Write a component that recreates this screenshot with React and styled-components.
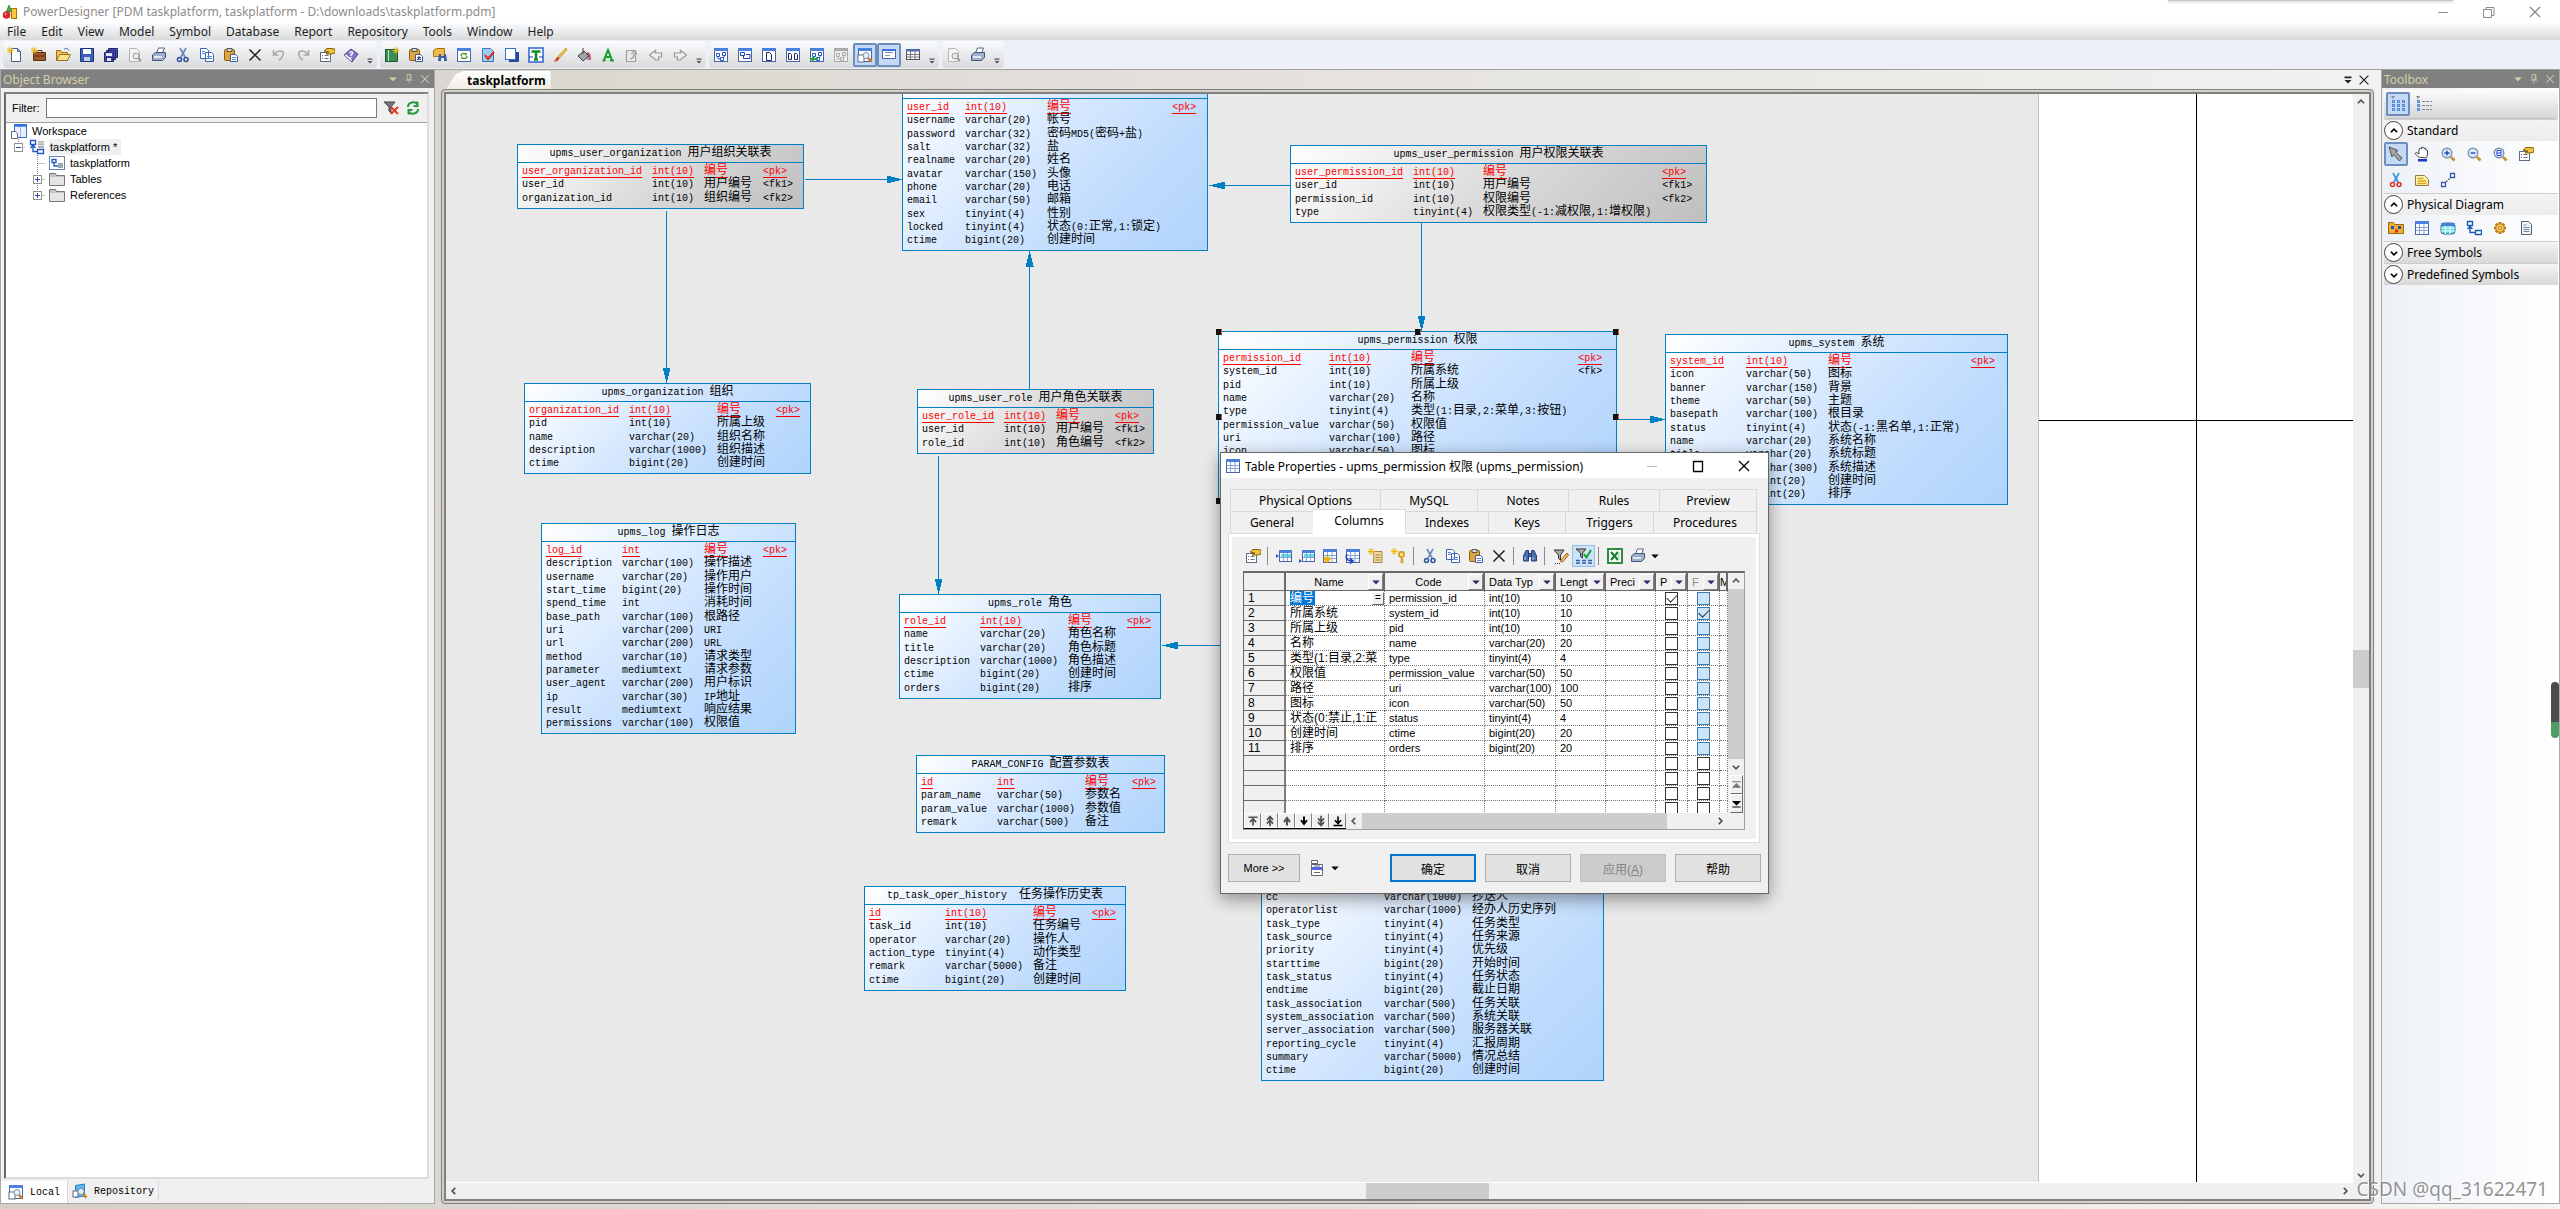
import React from 'react';
import styled, { createGlobalStyle, css } from 'styled-components';

const UI = '"Noto Sans", "Noto Sans CJK SC", sans-serif';
const SMALL = '"Liberation Sans", "Noto Sans CJK SC", sans-serif';
const MONO = '"Liberation Mono", "Noto Sans CJK SC", monospace';

const GlobalStyle = createGlobalStyle`
    * { box-sizing: border-box; }
    body { margin: 0; font-family: ${UI}; font-size: 12px; color: #000; }
    button { font: inherit; color: inherit; padding: 0; border: 0; background: none; }
    ul { list-style: none; margin: 0; padding: 0; }
`;

/* ---------- icons ---------- */

const star = <path d="M3 0v7M0 3.5h7M.6 1l5 5M5.6 1l-5 5" stroke="#f0b400" strokeWidth="1" />;
const page = <path d="M4.5 1.5h6l3 3v10h-9z M10.5 1.5v3h3" fill="#fff" stroke="#4a5f8c" />;
const lens = (
    <>
        <path d="M11 11l3.5 3.5" stroke="#c8922a" strokeWidth="2.6" />
        <circle cx="7" cy="7" r="4.8" fill="#dcebfa" stroke="#7c93b0" strokeWidth="1.4" />
    </>
);
const sheet = (
    <>
        <rect x="1.5" y="1.5" width="13" height="13" fill="#fff" stroke="#4863a8" />
        <rect x="1" y="1" width="14" height="3" fill="#4a80dc" />
    </>
);
const cells = (
    <>
        {sheet}
        <path d="M2 7.5h12M2 10.5h12M5.5 4v10M10 4v10" stroke="#8aa4d8" />
    </>
);
const cellsCyan = (
    <>
        <rect x="3.5" y="2.5" width="12" height="11" fill="#fff" stroke="#4863a8" />
        <rect x="3" y="2" width="13" height="3" fill="#4a80dc" />
        <rect x="5" y="6" width="10" height="4" fill="#59e0e8" />
        <path d="M4 9.5h11M7.5 5v8M11.5 5v8" stroke="#8aa4d8" />
    </>
);
const clipboard = (
    <>
        <rect x="1.5" y="2.5" width="10" height="11" rx="1" fill="#e0a63a" stroke="#8a5c14" />
        <path d="M4 1.5h5v3H4z" fill="#d8d8d8" stroke="#555" />
        <path d="M7.5 7.5h5l2 2v5h-7z" fill="#fff" stroke="#3c5a9c" />
        <path d="M9 10.5h4M9 12.5h4" stroke="#5b83d0" />
    </>
);
const scissors = color => (
    <>
        <path d="M5 1l5 9M11 1L6 10" stroke={color[0]} strokeWidth="1.7" fill="none" />
        <circle cx="4.5" cy="12.5" r="2" fill="none" stroke={color[1]} strokeWidth="1.5" />
        <circle cx="11" cy="12.5" r="2" fill="none" stroke={color[1]} strokeWidth="1.5" />
    </>
);
const printer = (
    <>
        <path d="M5.5 6l2-5h6l-2 5z" fill="#fff" stroke="#52658c" />
        <path d="M1.5 8l3-2.5h10v5l-3 3h-10z" fill="#9fb0cc" stroke="#44557a" />
        <path d="M3 10h8" stroke="#fff" strokeWidth="1.4" />
    </>
);
const properties = (
    <>
        <rect x="1.5" y="5.5" width="10" height="9" fill="#fff" stroke="#5f6c86" />
        <path d="M3 8.5h1M3 11.5h1M5.5 8.5h4M5.5 11.5h4" stroke="#777" />
        <path d="M5 4l3-2.5h4l4 .5v4l-4 1H7l3-2z" fill="#f0c43c" stroke="#80600c" />
    </>
);
const binoculars = (
    <>
        <path d="M4 2.5h2.5V13h-5V8z M9.5 2.5H12L14.5 8v5h-5z M6.5 5.5h3v3h-3z" fill="#4a70b4" stroke="#233c74" />
        <path d="M3 9v3M11 9v3" stroke="#b8d0f4" />
    </>
);
const cross = <path d="M2.5 2.5l11 11M13.5 2.5l-11 11" stroke="#222" strokeWidth="1.5" />;
const links = color => (
    <path d="M3.5 6.5h3v3h-3z M9.5 5.5h3v3h-3z M7.5 10.5h3v3h-3z M5 9.5v2.5h2.5 M11 8.5v2" fill="none" stroke={color} />
);

const icons = {
    logo: (
        <>
            <path d="M7 1l3 7H4z" fill="#3fae49" stroke="#1c7a2a" strokeWidth=".6" />
            <circle cx="4.5" cy="11" r="3.8" fill="#d02828" />
            <circle cx="3.5" cy="10" r="1.2" fill="#f09090" />
            <rect x="9.5" y="4.5" width="5" height="10" fill="#f8c83c" stroke="#a87410" />
        </>
    ),
    newModel: <>{page}{star}</>,
    project: <><path d="M2.5 5.5h12v8h-12z" fill="#9c5a2c" stroke="#5c3010" /><path d="M6 5V3.5h5V5M3 9h11" stroke="#5c3010" fill="none" />{star}</>,
    open: <><path d="M1.5 13.5v-10h4l1 2h6v8z" fill="#f2c44c" stroke="#9a7218" /><path d="M1.5 13.5l3-6h11l-3 6z" fill="#fae08c" stroke="#9a7218" /><path d="M9 2.5c2-2 4-1 5 1" stroke="#3c68b0" fill="none" /></>,
    save: <><path d="M1.5 1.5h13v13h-13z" fill="#3c5cc0" stroke="#1c3480" /><path d="M4 2h8v5H4z" fill="#fff" /><path d="M5 10h6v4H5z" fill="#c8d0e8" /></>,
    saveAll: <><path d="M5.5 1.5h9v9h-9z M3.5 3.5h9v9h-9z M1.5 5.5h9v9h-9z" fill="#4c50b8" stroke="#20246c" /><path d="M3 6h6v3H3z M4 11h4v3H4z" fill="#e4e6f8" /></>,
    preview: <><path d="M2.5 1.5h7l3 3v10h-10z" fill="#f4f4f4" stroke="#b4b4b4" /><circle cx="9" cy="9" r="3" fill="#eaeaea" stroke="#999" /><path d="M11 11l3 3" stroke="#999" strokeWidth="2" /></>,
    print: printer,
    cut: scissors(['#6c8cc0', '#2c50a4']),
    copy: <><path d="M1.5 1.5h6l2 2v8h-8z M6.5 5.5h6l2 2v7h-8z" fill="#fff" stroke="#3c66b4" /><path d="M8 9.5h5M8 11.5h5M3 4.5h3M3 6.5h3" stroke="#5b8ae0" /></>,
    paste: clipboard,
    del: cross,
    undo: <path d="M2.5 3v5h5M3 8c2-4 6-5 9-3 1 3-1 6-4 8" stroke="#a8a8a8" strokeWidth="1.6" fill="none" />,
    redo: <path d="M13.5 3v5h-5M13 8c-2-4-6-5-9-3-1 3 1 6 4 8" stroke="#a8a8a8" strokeWidth="1.6" fill="none" />,
    properties,
    help: <><path d="M1 8l7-6 7 5-6 8z" fill="#8078c4" stroke="#4c4490" /><path d="M1 8l8 7v-3L3 7z" fill="#fff" stroke="#4c4490" strokeWidth=".6" /><path d="M6.5 6c1-2 4-1 3 .6L8 8v1M8 10v1" stroke="#fff" fill="none" strokeWidth="1.3" /></>,
    newDiagram: <><rect x="1.5" y="2.5" width="12" height="12" fill="#3c8c54" stroke="#1c5c34" /><path d="M4.5 3v11" stroke="#b8e0c4" /><path d="M12 0v7M8.5 3.5h7M9.5 1l5 5M14.5 1l-5 5" stroke="#f0c020" /></>,
    pasteShort: <>{clipboard}<path d="M9 13l3-3M10 10h2v2" stroke="#1c3480" fill="none" /></>,
    find: <><path d="M1.5 3.5l3-2h8v8h-11z" fill="#f4b848" stroke="#a87410" /><path d="M7 7h2v7H6zM12 7h2l1 7h-3z M9 9h3v2H9z" fill="#3c5ca8" /></>,
    refreshWin: <>{sheet}<path d="M5 9c0-3 4-3 5-1.5V6M11 9c0 3-4 3-5 1.5V12" stroke="#4a9a20" fill="none" strokeWidth="1.3" /></>,
    check: <><path d="M2.5 1.5h8l3 3v10h-11z" fill="#9ccaf0" stroke="#3c78b4" /><path d="M5 8l3 4 6-7" stroke="#d82818" strokeWidth="2" fill="none" /></>,
    shadow: <><path d="M5 5h10v10H5z" fill="#24489c" /><rect x="1.5" y="1.5" width="10" height="11" fill="#fff" stroke="#3c68c8" /></>,
    text: <><rect x="1" y="1" width="14" height="14" fill="#fff" stroke="#2c60d0" strokeWidth="1.5" /><path d="M3.5 4.5h9M8 4v8M6 12.5h4" stroke="#108c28" strokeWidth="2.6" /><path d="M1 10h4M11 10h4" stroke="#2040a0" /></>,
    brush: <><path d="M14 1L6 9.5 7.5 11 15 3z" fill="#f4c030" stroke="#b07c10" strokeWidth=".6" /><path d="M6 10c-2 0-2 3-4.5 4.5C5 15 7 13 7.5 11z" fill="#d83818" /></>,
    fill: <><path d="M2 9l6-5 5 5-6 5z" fill="#a4a4a4" stroke="#444" /><path d="M7 1v6" stroke="#444" /><path d="M11 6c3 0 3 2 3 7" stroke="#e03030" strokeWidth="1.5" fill="none" /><path d="M10 7c3 0 2 2 2 6" stroke="#3040e0" fill="none" /></>,
    font: <path d="M2.5 13.5h3M10 13.5h4M4 13L8 3l4 10M5.5 10h5" stroke="#18a028" strokeWidth="2" fill="none" />,
    up: <path d="M2.5 3.5h9v11h-9z M6 12c3 0 4-2 4-6M7.5 7L10 3.5 13 7" fill="#e8e8e8" stroke="#a0a0a0" strokeWidth="1.2" />,
    back: <path d="M1.5 8l6-4.5V6h6v4h-3v3h-3v-.5z" fill="#efefef" stroke="#999" strokeWidth="1.2" />,
    forward: <path d="M14.5 8l-6-4.5V6h-6v4h3v3h3v-.5z" fill="#efefef" stroke="#999" strokeWidth="1.2" />,
    diag1: <>{sheet}{links('#2c54c8')}</>,
    diag2: <>{sheet}<path d="M3.5 5.5h4v3h-4zM9 7.5h4v4H6.5v-3" fill="none" stroke="#2040b0" /></>,
    diag3: <>{sheet}<path d="M5.5 5.5h3l2 2v6h-5z" fill="#fff" stroke="#1c2c60" /></>,
    diag4: <>{sheet}<path d="M3.5 6.5h2l1 1v5h-3zM9.5 6.5h2l1 1v5h-3z" fill="#fff" stroke="#1c2c60" /></>,
    diag5: <>{sheet}{links('#2c54c8')}<path d="M1 12l4-3v2h4v2H5v2z" fill="#20a838" /></>,
    diag6: <><rect x="1.5" y="1.5" width="13" height="13" fill="#eee" stroke="#aaa" /><path d="M1 3h14" stroke="#aaa" strokeWidth="2" />{links('#aaa')}</>,
    local: <>{sheet}<rect x="1" y="8" width="6" height="7" fill="#fff" stroke="#5c6c8c" /><path d="M11 11l3.5 3.5" stroke="#d08020" strokeWidth="2.5" /><circle cx="9" cy="8.5" r="3" fill="#e4f2fc" stroke="#7890a8" /></>,
    repo: <><path d="M3.5 2.5l9-1.5v12l-9 1.5z" fill="#5cb4ec" stroke="#2c80bc" /><rect x="1" y="8" width="5" height="6" fill="#fff" stroke="#5c6c8c" /><path d="M11 11l3.5 3.5" stroke="#d08020" strokeWidth="2.5" /><circle cx="9" cy="8.5" r="3" fill="#e4f2fc" stroke="#7890a8" /></>,
    output: <><path d="M1.5 2.5h13v9h-13z" fill="#fff" stroke="#4c64a0" /><path d="M4 5.5h8M4 8.5h5" stroke="#8494b4" /><path d="M1 3h14" stroke="#3c70d8" strokeWidth="2" /></>,
    result: <><rect x="1.5" y="2.5" width="13" height="10" fill="#fff" stroke="#4c4c6c" /><path d="M1 3.5h14" stroke="#5470b8" strokeWidth="2" /><path d="M2 7.5h12M2 10h12M5.5 4v8M10 4v8" stroke="#777" /></>,
    funnelX: <><path d="M1 2h11L8 7v6l-2-2V7z" fill="#777" stroke="#444" /><path d="M8 7l7 7M15 7l-7 7" stroke="#e83820" strokeWidth="2" /></>,
    refresh: <path d="M3 7c0-5 7-6 9-3V1.5M12.5 2v4h-4M13 9c0 5-7 6-9 3v2.5M3.5 14v-4h4" stroke="#249c3c" strokeWidth="2" fill="none" />,
    workspace: <><rect x="3.5" y="1.5" width="12" height="13" fill="#e8f0ff" stroke="#3c70c8" /><path d="M3 2.5h13" stroke="#3c70d8" strokeWidth="2.5" /><path d="M9.5 4v10" stroke="#9cb4e0" /><path d="M.5 8.5h4l2 2v5h-6z" fill="#fff" stroke="#5c6c8c" /></>,
    model: <><path d="M1.5 1.5h5v4h-5zM8.5 10.5h6v4h-6z M4 6v6.5h4M1.5 9L4 6l2.5 3" fill="#fff" stroke="#2458c8" strokeWidth="1.4" /><path d="M9 2h6v7H9z" fill="#b0b0b0" /><path d="M9 4h6M9 6.5h6" stroke="#e8e8e8" /></>,
    diagram: <><rect x=".5" y="1.5" width="15" height="13" fill="#fff" stroke="#6484b8" /><path d="M3 4.5h4v3H3zM5 8v3h4" stroke="#2458c8" fill="none" strokeWidth="1.3" /><rect x="9" y="8" width="5" height="5" fill="#9aa4b8" /></>,
    folder: <><path d="M.5 2.5h6l1 2h8v10H.5z" fill="#c4c4c4" stroke="#777" /><path d="M1 6h14v8H1z" fill="#e4e4e4" /></>,
    tiles: (
        <>
            <path d="M1 0l2 3 2-3z" fill="#888" />
            {[4.5, 8.5, 12.5].map(y => [2.5, 7.5, 12.5].map(x => (
                <rect key={`${x}-${y}`} x={x} y={y} width="2" height="2" fill="#f0a0b0" stroke="#4a90dc" />
            )))}
        </>
    ),
    list: (
        <>
            <path d="M0 0l2 3 2-3z" fill="#888" />
            {[4.5, 8.5, 12.5].map(y => (
                <React.Fragment key={y}>
                    <rect x="1.5" y={y} width="2" height="2" fill="#f0a0b0" stroke="#4a90dc" />
                    <path d={`M6 ${y + 1}h10`} stroke="#888" strokeDasharray="3 1" />
                </React.Fragment>
            ))}
        </>
    ),
    pointer: <path d="M1 1l9 3.5-2.5 1.5 6.5 6-2.5 3-6-6.5L4 11z" fill="#a4a4a4" stroke="#555" />,
    hand: <><path d="M4.5 11L1 7.5l1.5-1L5 8V3l1.5-1L7.5 3V1.5L9 1l1 1.5L11.5 2l.5 2 1.5.5V9L12 12z" fill="#fff" stroke="#333" strokeWidth=".9" /><path d="M4 13h9v2.5H4z" fill="#1438c8" /></>,
    zoomIn: <>{lens}<path d="M4.5 7h5M7 4.5v5" stroke="#2448a8" strokeWidth="1.4" /></>,
    zoomOut: <>{lens}<path d="M4.5 7h5" stroke="#2448a8" strokeWidth="1.4" /></>,
    zoomPage: <>{lens}<path d="M5 4.5h4v5H5zM5 7h4" stroke="#2448d8" fill="#fff" /></>,
    redCut: scissors(['#3c94d8', '#e03420']),
    note: <><path d="M1.5 3.5h9l4 4v6h-13z" fill="#fff4b0" stroke="#8c7c4c" /><path d="M3.5 6.5h6M3.5 9h9M3.5 11.5h9" stroke="#e0a020" strokeWidth="1.3" /></>,
    link: <><path d="M1.5 10.5h4v4h-4zM10.5 1.5h4v4h-4z" fill="#fff" stroke="#3c58b8" strokeWidth="1.3" /><path d="M6 10l4-4" stroke="#666" strokeWidth="1.4" strokeDasharray="2 1" /></>,
    pack: <><path d="M.5 13.5v-11h5l1 2h9v9z" fill="#f0b030" stroke="#9a6c10" /><path d="M3 6h3v3H3zM10 6h3v3h-3z" fill="#2c50b8" /><path d="M7 9.5h3v3H7z" fill="#d02c20" /></>,
    table: cells,
    view: <><rect x="1" y="3" width="14" height="11" rx="3" fill="#5ce0e0" stroke="#3c5c98" /><path d="M1 4.5h14" stroke="#4a80dc" strokeWidth="3" /><path d="M1 8h14M1 11h14M5.5 6v8M10 6v8" stroke="#fff" /></>,
    reference: <path d="M1.5 1.5h5v4h-5zM9.5 10.5h6v4h-6zM4 13V6M1.5 9L4 6.5 6.5 9M4 12.5h5" fill="#fff" stroke="#1c58b8" strokeWidth="1.4" />,
    gear: <><path d="M8 2v12M2 8h12M3.8 3.8l8.4 8.4M12.2 3.8l-8.4 8.4" stroke="#c88418" strokeWidth="3" /><circle cx="8" cy="8" r="4.3" fill="#f4c458" stroke="#b87810" /><circle cx="8" cy="8" r="1.5" fill="#fff" stroke="#b87810" /></>,
    file: <><path d="M3.5 1.5h7l3 3v10h-10z" fill="#f0f4fa" stroke="#52627c" /><path d="M5.5 5h3M5.5 7.5h6M5.5 9.5h6M5.5 11.5h6" stroke="#7888a0" /></>,
    insertRow: <>{cellsCyan}<path d="M0 6l3 2-3 2z" fill="#2458c8" /></>,
    addRow: <>{cellsCyan}<path d="M0 11l3 2-3 2z" fill="#2458c8" /></>,
    addStar: <>{cells}<path d="M5 8v7M1.5 11.5h7M2.5 9l5 5M7.5 9l-5 5" stroke="#f0b400" strokeWidth="1.3" /></>,
    replace: <>{cells}<path d="M2 6c-2 4 0 7 5 7M5 10.5l3 2.5-3 2.5" stroke="#1c48b8" fill="none" strokeWidth="1.6" /></>,
    scroll: <><path d="M6 3.5h8v11H5.5z" fill="#f0dca0" stroke="#a88440" /><path d="M7.5 7h5M7.5 9.5h5M7.5 12h5" stroke="#a88440" />{star}</>,
    key: <>{star}<path d="M10.5 9v6M10.5 12h2M10.5 14.5h2" stroke="#d09818" strokeWidth="1.5" /><circle cx="10.5" cy="6.5" r="2.7" fill="#fce080" stroke="#d09818" strokeWidth="1.5" /></>,
    binoculars,
    funnelPen: <><path d="M1 2h10L7.5 7v5l-2-1.5V7z" fill="#aaa" stroke="#333" /><path d="M14 5l-6 7v2l2-.5L15.5 7z" fill="#f4b860" stroke="#a05c20" /><path d="M2 15.5h5" stroke="#333" strokeDasharray="1 1" /></>,
    funnelCheck: <><path d="M0 1h10L6.5 5v5l-2-1.5V5z" fill="#aaa" stroke="#333" /><path d="M8 6l2.5 3.5L15 2" stroke="#18a030" strokeWidth="2" fill="none" /><path d="M0 12.5h16M0 15h16" stroke="#3c5ca8" strokeDasharray="4 2" strokeWidth="1.3" /></>,
    excel: <><rect x="1" y="1" width="14" height="14" fill="#fff" stroke="#2c8c3c" strokeWidth="2" /><path d="M4 4l7 8M11 4l-7 8" stroke="#18802c" strokeWidth="2.2" /><path d="M12 4v8" stroke="#b8dcc0" strokeWidth="1.5" /></>,
    form: <><path d="M2.5.5h6v3h-6zM2.5 4.5h11v11h-11z" fill="#fff" stroke="#667" /><path d="M3 8.5h10" stroke="#5468e8" strokeWidth="3" /><path d="M5 6h6M5 12.5h6" stroke="#667" /></>,
    pin: <path d="M5.5 2h5v7h-5zM3.5 9.5h9M8 10v4M9.5 2v7" stroke="currentColor" fill="none" />,
    close: <path d="M3 3l10 10M13 3L3 13" stroke="currentColor" strokeWidth="1.4" />,
    min: <path d="M3 8.5h10" stroke="currentColor" />,
    max: <path d="M3.5 3.5h9v10h-9z" stroke="currentColor" fill="none" strokeWidth="1.3" />,
    restore: <path d="M2.5 5.5h8v8h-8zM5 5V3.5h8v8h-2" stroke="currentColor" fill="none" />,
    caret: <path d="M3 6h10l-5 5z" fill="currentColor" />,
    overflow: <path d="M4 4h8v2H4zM4 8h8l-4 4z" fill="currentColor" />,
    chevUp: <path d="M3 10l5-5 5 5" stroke="currentColor" fill="none" strokeWidth="2.6" />,
    chevDown: <path d="M3 6l5 5 5-5" stroke="currentColor" fill="none" strokeWidth="2.6" />,
    chevLeft: <path d="M10 3L5 8l5 5" stroke="currentColor" fill="none" strokeWidth="2.6" />,
    chevRight: <path d="M6 3l5 5-5 5" stroke="currentColor" fill="none" strokeWidth="2.6" />,
    navTop: <path d="M2 3h12M8 14V6M4 9.5L8 5l4 4.5" stroke="currentColor" fill="none" strokeWidth="2.2" />,
    navPgUp: <path d="M8 15V3M4 6.5L8 2l4 4.5M4 11.5L8 7l4 4.5" stroke="currentColor" fill="none" strokeWidth="2.2" />,
    navUp: <path d="M8 14V5M4 9.5L8 4l4 5.5" stroke="currentColor" fill="none" strokeWidth="2.6" />,
    navDown: <path d="M8 2v9M4 7l4 5 4-5" stroke="#000" fill="none" strokeWidth="2.6" />,
    navPgDn: <path d="M8 1v12M4 9.5L8 14l4-4.5M4 4.5L8 9l4-4.5" stroke="currentColor" fill="none" strokeWidth="2.2" />,
    navEnd: <path d="M2 14h12M8 2v8M4 7l4 4.5L12 7" stroke="#000" fill="none" strokeWidth="2.2" />,
    toTop: <path d="M2 4h12M3 12l5-5 5 5z" stroke="currentColor" fill="currentColor" strokeWidth="1.5" />,
    toEnd: <path d="M2 13h12M3 5l5 5 5-5z" stroke="currentColor" fill="currentColor" strokeWidth="1.5" />,
};

const Svg = styled.svg`
    display: block;
    flex: none;
`;

const Icon = ({ name, size = 16 }) => (
    <Svg width={size} height={size} viewBox="0 0 16 16" fill="none" aria-hidden="true">
        {icons[name]}
    </Svg>
);

/* ---------- window frame ---------- */

const Window = styled.div`
    position: relative;
    display: flex;
    flex-direction: column;
    height: 100vh;
    overflow: hidden;
    background: linear-gradient(to right, #d4d0c8, #f5f4f3);
`;

const TitleBar = styled.header`
    display: flex;
    align-items: center;
    height: 23px;
    padding: 0 17px 0 2px;
    gap: 5px;
    background: #fff;
    color: #8c8c8c;
`;

const WindowTitle = styled.span`
    flex: 1;
    white-space: nowrap;
`;

const TitleButtons = styled.div`
    display: flex;
    gap: ${p => p.$gap}px;
`;

const MenuBar = styled.nav`
    display: flex;
    height: 17px;
    background: linear-gradient(#fbfcfd, #d8dadb);
`;

const MenuItem = styled.button`
    padding: 0 8px 0 7px;
    line-height: 17px;
    color: #1e1e1e;
`;

const ToolbarRow = styled.div`
    display: flex;
    height: 30px;
    padding: 1px 3px;
    gap: 3px;
    background: #edf0f6;
    border-bottom: 1px solid #a0a0a0;
`;

const ToolGroup = styled.div`
    display: flex;
    align-items: center;
    border-radius: 4px;
    background: linear-gradient(#fafbfc, #d9dadc);
`;

const ToolButton = styled.button`
    display: flex;
    align-items: center;
    justify-content: center;
    width: 24px;
    height: 24px;
    ${p => p.$on && css`
        background: #c3d9f5;
        border: 2px solid #6c8ebc;
        border-radius: 2px;
    `}
`;

const GroupEnd = styled.button`
    display: flex;
    align-self: flex-end;
    justify-content: center;
    width: 14px;
    height: 12px;
    color: #555;
`;

const Main = styled.main`
    display: flex;
    flex: 1;
    min-height: 0;
    padding-bottom: 5px;
`;

const Panel = styled.section`
    display: flex;
    flex-direction: column;
    width: ${p => p.$width}px;
    flex: none;
    border: 1px solid #a9a9a9;
    border-top: 0;
    background: ${p => p.$bg};
`;

const PanelHeader = styled.div`
    display: flex;
    align-items: center;
    height: 18px;
    padding: 0 3px 0 2px;
    gap: 4px;
    background: #808080;
    color: #d6cfa8;
    span { flex: 1; }
    button { height: 12px; }
`;

/* ---------- object browser ---------- */

const BrowserBody = styled.div`
    display: flex;
    flex-direction: column;
    flex: 1;
    margin: 4px 5px 2px 3px;
    border: 2px solid #dcdcdc;
    border-top-color: #808080;
    border-left-color: #696969;
    background: #fff;
    font-family: ${SMALL};
    font-size: 11px;
`;

const FilterBar = styled.div`
    display: flex;
    align-items: center;
    height: 29px;
    padding: 0 6px;
    gap: 6px;
    background: #f0f0f0;
    border-bottom: 1px solid #a0a0a0;
`;

const FilterInput = styled.input`
    flex: 1;
    height: 20px;
    border: 1px solid #7a7a7a;
    background: #fff;
`;

const TreeItem = styled.li`
    display: flex;
    align-items: center;
    height: 16px;
    padding-left: 5px;
    gap: 4px;
    white-space: nowrap;
`;

const TreeLabel = styled.span`
    padding: 0 4px 0 1px;
    line-height: 16px;
    background: ${p => (p.$active ? '#f0f0f0' : 'none')};
`;

const Guides = ({ width, lineX, expander, last }) => (
    <Svg width={width} height="16" aria-hidden="true">
        <path d={`M${lineX}.5 0v${last ? 8 : 16}M${lineX}.5 8.5H${width}`} stroke="#888" strokeDasharray="1 1" fill="none" />
        {expander && (
            <>
                <rect x={lineX - 4 + 0.5} y="4.5" width="8" height="8" fill="#fff" stroke="#919191" />
                <path d={`M${lineX - 2} 8.5h5${expander === '+' ? `M${lineX}.5 6v5` : ''}`} stroke="#2c4c9c" />
            </>
        )}
    </Svg>
);

const BottomTabs = styled.div`
    display: flex;
    align-items: flex-start;
    height: 22px;
    background: #f0f0f0;
    font-family: ${MONO};
    font-size: 10px;
`;

const BottomTab = styled.button`
    display: flex;
    align-items: center;
    height: ${p => (p.$active ? 22 : 20)}px;
    padding: 0 ${p => (p.$active ? 7 : 4)}px;
    gap: 6px;
    border-right: 1px solid #d9d9d9;
    background: ${p => (p.$active ? '#fff' : '#f0f0f0')};
`;

/* ---------- document ---------- */

const Doc = styled.section`
    display: flex;
    flex-direction: column;
    flex: 1;
    min-width: 0;
    margin: 0 7px 0 6px;
`;

const DocTabs = styled.div`
    display: flex;
    align-items: flex-end;
    justify-content: space-between;
    height: 19px;
    padding-left: 5px;
`;

const DocTab = styled.button`
    height: 18px;
    padding: 0 5px 0 21px;
    font-weight: 700;
    background: linear-gradient(#fff, #efece4);
    clip-path: polygon(0 100%, 10px 15%, 18px 0, 100% 0, 100% 100%);
`;

const DocButtons = styled.div`
    display: flex;
    align-self: center;
    gap: 2px;
    padding-right: 3px;
    color: #222;
`;

const DocFrame = styled.div`
    display: flex;
    flex: 1;
    min-height: 0;
    padding: 2px;
    border: 1px solid #808080;
    border-radius: 4px;
    background: #d4d0c8;
`;

const DocInner = styled.div`
    display: grid;
    flex: 1;
    min-width: 0;
    grid-template: minmax(0, 1fr) 16px / minmax(0, 1fr) 16px;
    border: 2px solid #808080;
    background: #f0f0f0;
`;

const Canvas = styled.div`
    position: relative;
    overflow: hidden;
    background: #fff;
    border-bottom: 1px solid #fff;
`;

const Page = styled.div`
    width: 1593px;
    height: 100%;
    background: #e9e9e9;
    border-right: 1px solid #c0c0c0;
`;

const Wires = styled.svg`
    position: absolute;
    inset: 0;
    width: 100%;
    height: 100%;
    shape-rendering: crispEdges;
`;

const ScrollBar = styled.div`
    display: flex;
    flex-direction: ${p => (p.$row ? 'row' : 'column')};
    align-items: center;
    background: #f0f0f0;
    color: #505050;
    button { flex: none; padding: ${p => (p.$row ? '0 3px' : '3px 0')}; }
`;

const Track = styled.div`
    display: flex;
    flex: 1;
    align-self: stretch;
    flex-direction: ${p => (p.$row ? 'row' : 'column')};
`;

const Thumb = styled.div`
    flex: 0 0 ${p => p.$size};
    margin-${p => (p.$row ? 'left' : 'top')}: ${p => p.$start};
    background: #cdcdcd;
`;

/* ---------- entities ---------- */

const fills = {
    blue: 'linear-gradient(135deg, #fff, #d4e7fe 45%, #c0dcfd 70%, #b0d4fc)',
    grey: 'linear-gradient(135deg, #fff, #dedede 45%, #cfcfcf 70%, #bfbfbf)',
};

const EntityBox = styled.article`
    position: absolute;
    left: ${p => p.$x}px;
    top: ${p => p.$y}px;
    width: ${p => p.$w}px;
    min-height: ${p => p.$min || 0}px;
    border: 1px solid #0080c0;
    background: ${p => fills[p.$fill]};
    font-family: ${MONO};
    font-size: 10px;
    line-height: 13px;
`;

const EntityTitle = styled.div`
    display: flex;
    align-items: center;
    justify-content: center;
    height: 18px;
    border-bottom: 1px solid #0080c0;
`;

const EntityTable = styled.table`
    margin: 2px 0 3px 4px;
    border-spacing: 0;
    td { height: 13px; padding: 0 10px 0 0; white-space: nowrap; }
    td:first-child { min-width: ${p => p.$first || 0}px; }
    td:nth-child(3) { padding-right: 11px; }
    tr:nth-child(3n) td { height: 14px; }
`;

const Mixed = styled.span`
    display: inline-flex;
    align-items: center;
    height: 13px;
    vertical-align: top;
    white-space: pre;
    ${p => p.$key && css`
        color: #f00;
        border-bottom: 1px solid #f00;
    `}
`;

const Han = styled.span`
    font-size: 12px;
`;

const Label = ({ text, isKey }) => (
    <Mixed $key={isKey}>
        {text.split(/([\u4e00-\u9fff]+)/).map((part, i) => (
            i % 2 ? <Han key={i}>{part}</Han> : part && <span key={i}>{part}</span>
        ))}
    </Mixed>
);

const Handle = styled.i`
    position: absolute;
    left: ${p => p.$left};
    top: ${p => p.$top};
    width: 6px;
    height: 6px;
    margin: -3px;
    background: #111;
    border: 1px solid #111;
    border-right-color: #e06030;
`;

const HANDLES = [['0', '0'], ['50%', '0'], ['100%', '0'], ['0', '50%'], ['100%', '50%'], ['0', '100%']];

const Entity = ({ x, y, w, min, first, fill = 'blue', title, rows, selected }) => (
    <EntityBox $x={x} $y={y} $w={w} $min={min} $fill={fill}>
        <EntityTitle><Label text={title} /></EntityTitle>
        <EntityTable $first={first}>
            <tbody>
                {rows.map((row, i) => (
                    <tr key={row}>
                        {row.split('|').map((cell, j) => (
                            <td key={j}>{cell && <Label text={cell} isKey={i === 0 && row.includes('<pk>')} />}</td>
                        ))}
                    </tr>
                ))}
            </tbody>
        </EntityTable>
        {selected && HANDLES.map(([left, top]) => <Handle key={left + top} $left={left} $top={top} />)}
    </EntityBox>
);

const entities = [
    { x: 456, y: -14, w: 306, title: '', rows: [
        'user_id|int(10)|编号|<pk>', 'username|varchar(20)|帐号', 'password|varchar(32)|密码MD5(密码+盐)',
        'salt|varchar(32)|盐', 'realname|varchar(20)|姓名', 'avatar|varchar(150)|头像', 'phone|varchar(20)|电话',
        'email|varchar(50)|邮箱', 'sex|tinyint(4)|性别', 'locked|tinyint(4)|状态(0:正常,1:锁定)', 'ctime|bigint(20)|创建时间',
    ] },
    { x: 71, y: 50, w: 287, fill: 'grey', title: 'upms_user_organization 用户组织关联表', rows: [
        'user_organization_id|int(10)|编号|<pk>', 'user_id|int(10)|用户编号|<fk1>', 'organization_id|int(10)|组织编号|<fk2>',
    ] },
    { x: 844, y: 51, w: 417, fill: 'grey', title: 'upms_user_permission 用户权限关联表', rows: [
        'user_permission_id|int(10)|编号|<pk>', 'user_id|int(10)|用户编号|<fk1>', 'permission_id|int(10)|权限编号|<fk2>',
        'type|tinyint(4)|权限类型(-1:减权限,1:增权限)',
    ] },
    { x: 772, y: 237, w: 399, min: 171, selected: true, title: 'upms_permission 权限', rows: [
        'permission_id|int(10)|编号|<pk>', 'system_id|int(10)|所属系统|<fk>', 'pid|int(10)|所属上级', 'name|varchar(20)|名称',
        'type|tinyint(4)|类型(1:目录,2:菜单,3:按钮)', 'permission_value|varchar(50)|权限值', 'uri|varchar(100)|路径',
        'icon|varchar(50)|图标',
    ] },
    { x: 1219, y: 240, w: 343, first: 76, title: 'upms_system 系统', rows: [
        'system_id|int(10)|编号|<pk>', 'icon|varchar(50)|图标', 'banner|varchar(150)|背景', 'theme|varchar(50)|主题',
        'basepath|varchar(100)|根目录', 'status|tinyint(4)|状态(-1:黑名单,1:正常)', 'name|varchar(20)|系统名称',
        'title|varchar(20)|系统标题', '|varchar(300)|系统描述', '|bigint(20)|创建时间', '|bigint(20)|排序',
    ] },
    { x: 78, y: 289, w: 287, title: 'upms_organization 组织', rows: [
        'organization_id|int(10)|编号|<pk>', 'pid|int(10)|所属上级', 'name|varchar(20)|组织名称',
        'description|varchar(1000)|组织描述', 'ctime|bigint(20)|创建时间',
    ] },
    { x: 471, y: 295, w: 237, fill: 'grey', title: 'upms_user_role 用户角色关联表', rows: [
        'user_role_id|int(10)|编号|<pk>', 'user_id|int(10)|用户编号|<fk1>', 'role_id|int(10)|角色编号|<fk2>',
    ] },
    { x: 95, y: 429, w: 255, title: 'upms_log 操作日志', rows: [
        'log_id|int|编号|<pk>', 'description|varchar(100)|操作描述', 'username|varchar(20)|操作用户', 'start_time|bigint(20)|操作时间',
        'spend_time|int|消耗时间', 'base_path|varchar(100)|根路径', 'uri|varchar(200)|URI', 'url|varchar(200)|URL',
        'method|varchar(10)|请求类型', 'parameter|mediumtext|请求参数', 'user_agent|varchar(200)|用户标识', 'ip|varchar(30)|IP地址',
        'result|mediumtext|响应结果', 'permissions|varchar(100)|权限值',
    ] },
    { x: 453, y: 500, w: 262, title: 'upms_role 角色', rows: [
        'role_id|int(10)|编号|<pk>', 'name|varchar(20)|角色名称', 'title|varchar(20)|角色标题',
        'description|varchar(1000)|角色描述', 'ctime|bigint(20)|创建时间', 'orders|bigint(20)|排序',
    ] },
    { x: 470, y: 661, w: 249, title: 'PARAM_CONFIG 配置参数表', rows: [
        'id|int|编号|<pk>', 'param_name|varchar(50)|参数名', 'param_value|varchar(1000)|参数值', 'remark|varchar(500)|备注',
    ] },
    { x: 418, y: 792, w: 262, title: 'tp_task_oper_history  任务操作历史表', rows: [
        'id|int(10)|编号|<pk>', 'task_id|int(10)|任务编号', 'operator|varchar(20)|操作人', 'action_type|tinyint(4)|动作类型',
        'remark|varchar(5000)|备注', 'ctime|bigint(20)|创建时间',
    ] },
    { x: 815, y: 776, w: 343, title: '', rows: [
        'cc|varchar(1000)|抄送人', 'operatorlist|varchar(1000)|经办人历史序列', 'task_type|tinyint(4)|任务类型',
        'task_source|tinyint(4)|任务来源', 'priority|tinyint(4)|优先级', 'starttime|bigint(20)|开始时间',
        'task_status|tinyint(4)|任务状态', 'endtime|bigint(20)|截止日期', 'task_association|varchar(500)|任务关联',
        'system_association|varchar(500)|系统关联', 'server_association|varchar(500)|服务器关联',
        'reporting_cycle|tinyint(4)|汇报周期', 'summary|varchar(5000)|情况总结', 'ctime|bigint(20)|创建时间',
    ] },
];

// x1, y1, x2, y2 of every reference, arrow at the second point
const wires = [
    [358, 85, 456, 85],
    [220, 116, 220, 289],
    [583, 295, 583, 156],
    [492, 361, 492, 500],
    [844, 91, 762, 91],
    [975, 128, 975, 237],
    [1171, 325, 1219, 325],
    [800, 551, 715, 551],
];

const Diagram = () => (
    <Canvas>
        <Page />
        <Wires aria-hidden="true">
            <defs>
                <marker id="arrow" viewBox="0 0 16 8" refX="16" refY="4" markerWidth="16" markerHeight="8" markerUnits="userSpaceOnUse" orient="auto">
                    <path d="M0 0l16 4L0 8z" fill="#0080c0" />
                </marker>
            </defs>
            {wires.map(([x1, y1, x2, y2]) => (
                <path key={`${x1}-${y1}`} d={`M${x1 + 0.5} ${y1 + 0.5}L${x2 + 0.5} ${y2 + 0.5}`} stroke="#0080c0" markerEnd="url(#arrow)" />
            ))}
            <path d="M1750.5 0v2000M1593 326.5h2000" stroke="#000" />
        </Wires>
        {entities.map(e => <Entity key={e.x} {...e} />)}
    </Canvas>
);

/* ---------- toolbox ---------- */

const ToolboxBar = styled.div`
    display: flex;
    gap: 2px;
    height: 29px;
    margin: 2px 1px 0 2px;
    padding: 2px;
    border-bottom: 1px solid #c4c4c4;
    border-radius: 0 0 3px 3px;
    background: linear-gradient(#fcfcfd, #d4d6d8);
`;

const SectionHeader = styled.button`
    display: flex;
    align-items: center;
    height: 22px;
    gap: 4px;
    margin: 0 1px 0 2px;
    border-top: 1px solid #cfcfcf;
    background: linear-gradient(#f4f4f4, ${p => (p.$open ? '#ececec' : '#d8d8d8')});
`;

const Round = styled.span`
    display: flex;
    align-items: center;
    justify-content: center;
    width: 19px;
    height: 19px;
    border: 1px solid #444;
    border-radius: 50%;
    background: #fff;
`;

const ToolGrid = styled.div`
    display: grid;
    grid-template-columns: repeat(auto-fill, 24px);
    gap: 2px;
    padding: 1px 0 1px 2px;
`;

const sections = [
    { name: 'Standard', tools: ['pointer', 'hand', 'zoomIn', 'zoomOut', 'zoomPage', 'properties', 'redCut', 'note', 'link'] },
    { name: 'Physical Diagram', tools: ['pack', 'table', 'view', 'reference', 'gear', 'file'] },
    { name: 'Free Symbols' },
    { name: 'Predefined Symbols' },
];

const Toolbox = () => (
    <Panel $width={179} $bg="linear-gradient(to right, #edf1f7, #fff)">
        <PanelHeader>
            <span>Toolbox</span>
            {['caret', 'pin', 'close'].map(n => <button key={n} aria-label={n}><Icon name={n} size={12} /></button>)}
        </PanelHeader>
        <ToolboxBar>
            <ToolButton $on aria-label="Icons"><Icon name="tiles" /></ToolButton>
            <ToolButton aria-label="List"><Icon name="list" /></ToolButton>
        </ToolboxBar>
        {sections.map(s => (
            <React.Fragment key={s.name}>
                <SectionHeader $open={!!s.tools}>
                    <Round><Icon name={s.tools ? 'chevUp' : 'chevDown'} size={10} /></Round>
                    {s.name}
                </SectionHeader>
                {s.tools && (
                    <ToolGrid>
                        {s.tools.map(t => <ToolButton key={t} $on={t === 'pointer'} aria-label={t}><Icon name={t} /></ToolButton>)}
                    </ToolGrid>
                )}
            </React.Fragment>
        ))}
    </Panel>
);

/* ---------- table properties dialog ---------- */

const Dialog = styled.section`
    position: absolute;
    left: 1220px;
    top: 452px;
    display: flex;
    flex-direction: column;
    width: 549px;
    border: 1px solid #666;
    background: #f0f0f0;
    box-shadow: 0 5px 16px rgba(0, 0, 0, 0.4);
`;

const DialogTitle = styled.div`
    display: flex;
    align-items: center;
    height: 25px;
    padding: 0 16px 0 4px;
    gap: 4px;
    background: #fff;
    > span { flex: 1; }
`;

const DimButton = styled.button`
    color: #bbb;
`;

const TabRow = styled.div`
    display: grid;
    grid-template-columns: ${p => p.$cols};
    height: 22px;
    margin: ${p => p.$top || 0}px 11px 0 9px;
    border-left: 1px solid #d9d9d9;
`;

const Tab = styled.button`
    border-top: 1px solid #d9d9d9;
    border-right: 1px solid #d9d9d9;
    ${p => p.$active && css`
        margin: -2px 0 -1px -1px;
        padding-bottom: 3px;
        background: #fff;
        z-index: 1;
    `}
`;

const TabPage = styled.div`
    margin: 0 8px 0 7px;
    padding: 9px 8px 12px;
    border: 1px solid #dcdcdc;
    outline: 3px solid #fff;
    outline-offset: -4px;
`;

const GridToolbar = styled.div`
    display: flex;
    align-items: center;
    height: 24px;
    margin: 1px 4px 3px;
`;

const GridTool = styled.button`
    display: flex;
    align-items: center;
    justify-content: center;
    width: 23px;
    height: 22px;
    background: ${p => (p.$on ? '#cce4f7' : 'none')};
    box-shadow: ${p => (p.$on ? 'inset 0 0 0 1px #90c0e8' : 'none')};
`;

const Separator = styled.i`
    width: 1px;
    height: 18px;
    margin: 0 4px 0 3px;
    background: #8c8c8c;
`;

const GridFrame = styled.div`
    display: grid;
    grid-template: 240px 16px / minmax(0, 1fr) 16px;
    margin: 0 6px;
    border: 1px solid #a0a0a0;
    border-top: 2px solid #696969;
    border-left: 1px solid #696969;
    background: #f0f0f0;
`;

const GridView = styled.div`
    overflow: hidden;
    background: #fff;
`;

const Grid = styled.table`
    width: 100%;
    table-layout: fixed;
    border-spacing: 0;
    font-family: ${SMALL};
    font-size: 11px;
    line-height: 14px;
    th, td { padding: 0; overflow: hidden; white-space: nowrap; text-align: left; font-weight: 400; }
    thead th { height: 18px; background: #f0f0f0; border-right: 2px solid #696969; border-bottom: 1px solid #696969; }
    tbody th { height: 15px; padding-left: 4px; background: #f0f0f0; border-right: 2px solid #808080; border-bottom: 1px solid #696969; font-size: 12px; }
    td { height: 15px; padding-left: 4px; border-right: 1px dotted #777; border-bottom: 1px dotted #777; }
    td:nth-child(2) { font-size: 12px; }
    td:nth-child(n + 7) { padding-left: 9px; }
`;

const HeadCell = styled.div`
    display: flex;
    align-items: center;
    justify-content: flex-end;
    padding-left: 4px;
    color: ${p => (p.$dim ? '#8c8c8c' : '#000')};
    span { flex: 1; text-align: ${p => (p.$wide ? 'center' : 'left')}; }
`;

const DropButton = styled.button`
    display: flex;
    align-items: center;
    justify-content: center;
    flex: none;
    width: 15px;
    height: 16px;
    border: 1px solid #fff;
    border-right-color: #808080;
    border-bottom-color: #808080;
    color: #28286c;
`;

const NameCell = styled.div`
    display: flex;
    align-items: center;
    justify-content: space-between;
    height: 14px;
    span { padding: 0 1px 0 0; ${p => p.$selected && 'background: #0078d7; color: #fff;'} }
    button { width: 12px; height: 13px; border: 1px solid #fff; border-right-color: #696969; border-bottom-color: #696969; background: #f0f0f0; font-size: 10px; line-height: 10px; }
`;

const Check = styled.input.attrs({ type: 'checkbox' })`
    appearance: none;
    display: block;
    width: 13px;
    height: 13px;
    margin: 1px 0 0;
    border: 1px solid ${p => (p.$blue ? '#3c78b4' : '#333')};
    background: ${p => (p.$blue ? '#cce4f7' : '#fff')};
    &:checked::after {
        content: '';
        display: block;
        width: 9px;
        height: 5px;
        margin: 1px;
        border-left: 1px solid #333;
        border-bottom: 1px solid #333;
        transform: rotate(-45deg);
    }
`;

const NavButtons = styled.div`
    display: flex;
    align-self: stretch;
    padding-bottom: 1px;
    background: #000;
    button {
        display: flex;
        align-items: center;
        justify-content: center;
        width: 17px;
        padding: 0;
        background: #f0f0f0;
        border: 1px solid #fff;
        border-right-color: #808080;
    }
`;

const SideButton = styled.div`
    display: flex;
    flex-direction: column;
    color: ${p => (p.$dim ? '#777' : '#000')};
    border: 1px solid #fff;
    border-right-color: #696969;
    border-bottom-color: #696969;
`;

const Footer = styled.div`
    display: flex;
    align-items: center;
    height: 50px;
    padding: 0 7px;
    gap: 9px;
`;

const PushButton = styled.button`
    width: ${p => p.$width || 86}px;
    height: 28px;
    border: 1px solid #adadad;
    background: #e1e1e1;
    font-family: ${SMALL};
    ${p => p.$primary && 'border: 2px solid #0078d7;'}
    &:disabled { background: #ccc; border-color: #bfbfbf; color: #838383; }
`;

const MoreButton = styled(PushButton)`
    font-size: 11px;
`;

const FormMenu = styled.button`
    display: flex;
    align-items: center;
    gap: 4px;
    flex: 1;
`;

const columns = [
    ['Name', 99], ['Code', 100], ['Data Typ', 71], ['Lengt', 50], ['Preci', 50], ['P', 32], ['F', 32],
];

const gridRows = [
    ['编号', 'permission_id', 'int(10)', '10'],
    ['所属系统', 'system_id', 'int(10)', '10'],
    ['所属上级', 'pid', 'int(10)', '10'],
    ['名称', 'name', 'varchar(20)', '20'],
    ['类型(1:目录,2:菜', 'type', 'tinyint(4)', '4'],
    ['权限值', 'permission_value', 'varchar(50)', '50'],
    ['路径', 'uri', 'varchar(100)', '100'],
    ['图标', 'icon', 'varchar(50)', '50'],
    ['状态(0:禁止,1:正', 'status', 'tinyint(4)', '4'],
    ['创建时间', 'ctime', 'bigint(20)', '20'],
    ['排序', 'orders', 'bigint(20)', '20'],
    [], [], [], [],
];

const gridTools = [
    'properties', '|', 'insertRow', 'addRow', 'addStar', 'replace', 'scroll', 'key', '|',
    'cut', 'copy', 'paste', 'del', '|', 'binoculars', '|', 'funnelPen', 'funnelCheck', '|', 'excel', 'print',
];

const TableProperties = () => (
    <Dialog role="dialog" aria-label="Table Properties">
        <DialogTitle>
            <Icon name="table" />
            <span>Table Properties - upms_permission 权限 (upms_permission)</span>
            <TitleButtons $gap={30}>
                <DimButton aria-label="Minimize"><Icon name="min" /></DimButton>
                <button aria-label="Maximize"><Icon name="max" /></button>
                <button aria-label="Close"><Icon name="close" /></button>
            </TitleButtons>
        </DialogTitle>
        <TabRow $top={11} $cols="150fr 97fr 91fr 91fr 97fr">
            {['Physical Options', 'MySQL', 'Notes', 'Rules', 'Preview'].map(t => <Tab key={t}>{t}</Tab>)}
        </TabRow>
        <TabRow $cols="83fr 92fr 83fr 77fr 88fr 103fr">
            {['General', 'Columns', 'Indexes', 'Keys', 'Triggers', 'Procedures'].map(t => <Tab key={t} $active={t === 'Columns'}>{t}</Tab>)}
        </TabRow>
        <TabPage>
            <GridToolbar>
                {gridTools.map((t, i) => (
                    t === '|' ? <Separator key={i} /> : <GridTool key={i} $on={t === 'funnelCheck'} aria-label={t}><Icon name={t} /></GridTool>
                ))}
                <button aria-label="Print menu"><Icon name="caret" size={12} /></button>
            </GridToolbar>
            <GridFrame>
                <GridView>
                    <Grid>
                        <colgroup>
                            <col width="42" />
                            {columns.map(([name, width]) => <col key={name} width={width} />)}
                            <col />
                        </colgroup>
                        <thead>
                            <tr>
                                <th aria-label="Row" />
                                {columns.map(([name, width]) => (
                                    <th key={name}>
                                        <HeadCell $wide={width > 80} $dim={name === 'F'}>
                                            <span>{name}</span>
                                            <DropButton aria-label={`Filter ${name}`}><Icon name="caret" size={12} /></DropButton>
                                        </HeadCell>
                                    </th>
                                ))}
                                <th>M</th>
                            </tr>
                        </thead>
                        <tbody>
                            {gridRows.map(([name, code, type, length], i) => (
                                <tr key={i}>
                                    <th>{name && i + 1}</th>
                                    <td>
                                        <NameCell $selected={i === 0}>
                                            <span>{name}</span>
                                            {i === 0 && <button aria-label="Code from name">=</button>}
                                        </NameCell>
                                    </td>
                                    <td>{code}</td>
                                    <td>{type}</td>
                                    <td>{length}</td>
                                    <td />
                                    <td><Check defaultChecked={i === 0} aria-label={`Primary ${i + 1}`} /></td>
                                    <td><Check $blue={!!name} defaultChecked={i === 1} aria-label={`Foreign ${i + 1}`} /></td>
                                    <td />
                                </tr>
                            ))}
                        </tbody>
                    </Grid>
                </GridView>
                <ScrollBar>
                    <button aria-label="Scroll up"><Icon name="chevUp" size={10} /></button>
                    <Track><Thumb $size="100%" $start="0" /></Track>
                    <button aria-label="Scroll down"><Icon name="chevDown" size={10} /></button>
                    <SideButton $dim><button aria-label="First row"><Icon name="toTop" size={11} /></button></SideButton>
                    <SideButton><button aria-label="Last row"><Icon name="toEnd" size={11} /></button></SideButton>
                </ScrollBar>
                <ScrollBar $row>
                    <NavButtons>
                        {['navTop', 'navPgUp', 'navUp', 'navDown', 'navPgDn', 'navEnd'].map(n => (
                            <button key={n} aria-label={n}><Icon name={n} size={12} /></button>
                        ))}
                    </NavButtons>
                    <button aria-label="Scroll left"><Icon name="chevLeft" size={10} /></button>
                    <Track $row><Thumb $row $size="87%" $start="0" /></Track>
                    <button aria-label="Scroll right"><Icon name="chevRight" size={10} /></button>
                </ScrollBar>
            </GridFrame>
        </TabPage>
        <Footer>
            <MoreButton $width={72}>More &gt;&gt;</MoreButton>
            <FormMenu aria-label="Form menu"><Icon name="form" /><Icon name="caret" size={12} /></FormMenu>
            <PushButton $primary>确定</PushButton>
            <PushButton>取消</PushButton>
            <PushButton disabled>应用(<u>A</u>)</PushButton>
            <PushButton>帮助</PushButton>
        </Footer>
    </Dialog>
);

/* ---------- overlays at the screen edge ---------- */

const Watermark = styled.div`
    position: absolute;
    right: 12px;
    bottom: 5px;
    font-family: "Noto Sans", sans-serif;
    font-size: 19px;
    line-height: 30px;
    color: rgba(120, 120, 120, 0.8);
    text-shadow: 1px 1px 0 #fff;
`;

const TopShade = styled.div`
    position: absolute;
    top: 0;
    right: 107px;
    width: 285px;
    height: 1px;
    background: #c4c4c4;
    box-shadow: 0 1px 3px #aaa;
`;

const EdgeWidget = styled.div`
    position: absolute;
    right: 1px;
    top: 682px;
    width: 8px;
    height: 56px;
    border-radius: 4px;
    background: linear-gradient(#4c4c50 72%, #4c9c64 72%);
`;

const menus = ['File', 'Edit', 'View', 'Model', 'Symbol', 'Database', 'Report', 'Repository', 'Tools', 'Window', 'Help'];

const toolGroups = [
    ['newModel', 'project', 'open', 'save', 'saveAll', 'preview', 'print', 'cut', 'copy', 'paste', 'del', 'undo', 'redo', 'properties', 'help'],
    ['newDiagram', 'pasteShort', 'find', 'refreshWin', 'check', 'shadow', 'text', 'brush', 'fill', 'font', 'up', 'back', 'forward'],
    ['diag1', 'diag2', 'diag3', 'diag4', 'diag5', 'diag6', 'local', 'output', 'result'],
    ['preview', 'print'],
];

const ObjectBrowser = () => (
    <Panel $width={435} $bg="#f0f0f0">
        <PanelHeader>
            <span>Object Browser</span>
            {['caret', 'pin', 'close'].map(n => <button key={n} aria-label={n}><Icon name={n} size={12} /></button>)}
        </PanelHeader>
        <BrowserBody>
            <FilterBar>
                <label htmlFor="filter">Filter:</label>
                <FilterInput id="filter" />
                <button aria-label="Clear filter"><Icon name="funnelX" /></button>
                <button aria-label="Refresh"><Icon name="refresh" /></button>
            </FilterBar>
            <ul>
                <TreeItem><Icon name="workspace" /><TreeLabel>Workspace</TreeLabel></TreeItem>
                <TreeItem><Guides width={14} lineX={7} expander="-" last /><Icon name="model" /><TreeLabel $active>taskplatform *</TreeLabel></TreeItem>
                <TreeItem><Guides width={34} lineX={26} /><Icon name="diagram" /><TreeLabel>taskplatform</TreeLabel></TreeItem>
                <TreeItem><Guides width={34} lineX={26} expander="+" /><Icon name="folder" /><TreeLabel>Tables</TreeLabel></TreeItem>
                <TreeItem><Guides width={34} lineX={26} expander="+" last /><Icon name="folder" /><TreeLabel>References</TreeLabel></TreeItem>
            </ul>
        </BrowserBody>
        <BottomTabs>
            <BottomTab $active><Icon name="local" />Local</BottomTab>
            <BottomTab><Icon name="repo" />Repository</BottomTab>
        </BottomTabs>
    </Panel>
);

const App = () => (
    <Window>
        <GlobalStyle />
        <TitleBar>
            <Icon name="logo" />
            <WindowTitle>PowerDesigner [PDM taskplatform, taskplatform - D:\downloads\taskplatform.pdm]</WindowTitle>
            <TitleButtons $gap={30}>
                {['min', 'restore', 'close'].map(n => <button key={n} aria-label={n}><Icon name={n} /></button>)}
            </TitleButtons>
        </TitleBar>
        <MenuBar>
            {menus.map(m => <MenuItem key={m}>{m}</MenuItem>)}
        </MenuBar>
        <ToolbarRow>
            {toolGroups.map((group, i) => (
                <ToolGroup key={i}>
                    {group.map(t => <ToolButton key={t} $on={t === 'local' || t === 'output'} aria-label={t}><Icon name={t} /></ToolButton>)}
                    <GroupEnd aria-label="More buttons"><Icon name="overflow" size={10} /></GroupEnd>
                </ToolGroup>
            ))}
        </ToolbarRow>
        <Main>
            <ObjectBrowser />
            <Doc>
                <DocTabs>
                    <DocTab>taskplatform</DocTab>
                    <DocButtons>
                        <button aria-label="Windows"><Icon name="overflow" size={14} /></button>
                        <button aria-label="Close"><Icon name="close" size={14} /></button>
                    </DocButtons>
                </DocTabs>
                <DocFrame>
                    <DocInner>
                        <Diagram />
                        <ScrollBar>
                            <button aria-label="Scroll up"><Icon name="chevUp" size={10} /></button>
                            <Track><Thumb $size="38px" $start="540px" /></Track>
                            <button aria-label="Scroll down"><Icon name="chevDown" size={10} /></button>
                        </ScrollBar>
                        <ScrollBar $row>
                            <button aria-label="Scroll left"><Icon name="chevLeft" size={10} /></button>
                            <Track $row><Thumb $row $size="123px" $start="904px" /></Track>
                            <button aria-label="Scroll right"><Icon name="chevRight" size={10} /></button>
                        </ScrollBar>
                    </DocInner>
                </DocFrame>
            </Doc>
            <Toolbox />
        </Main>
        <TableProperties />
        <TopShade />
        <EdgeWidget />
        <Watermark>CSDN @qq_31622471</Watermark>
    </Window>
);

export default App;
